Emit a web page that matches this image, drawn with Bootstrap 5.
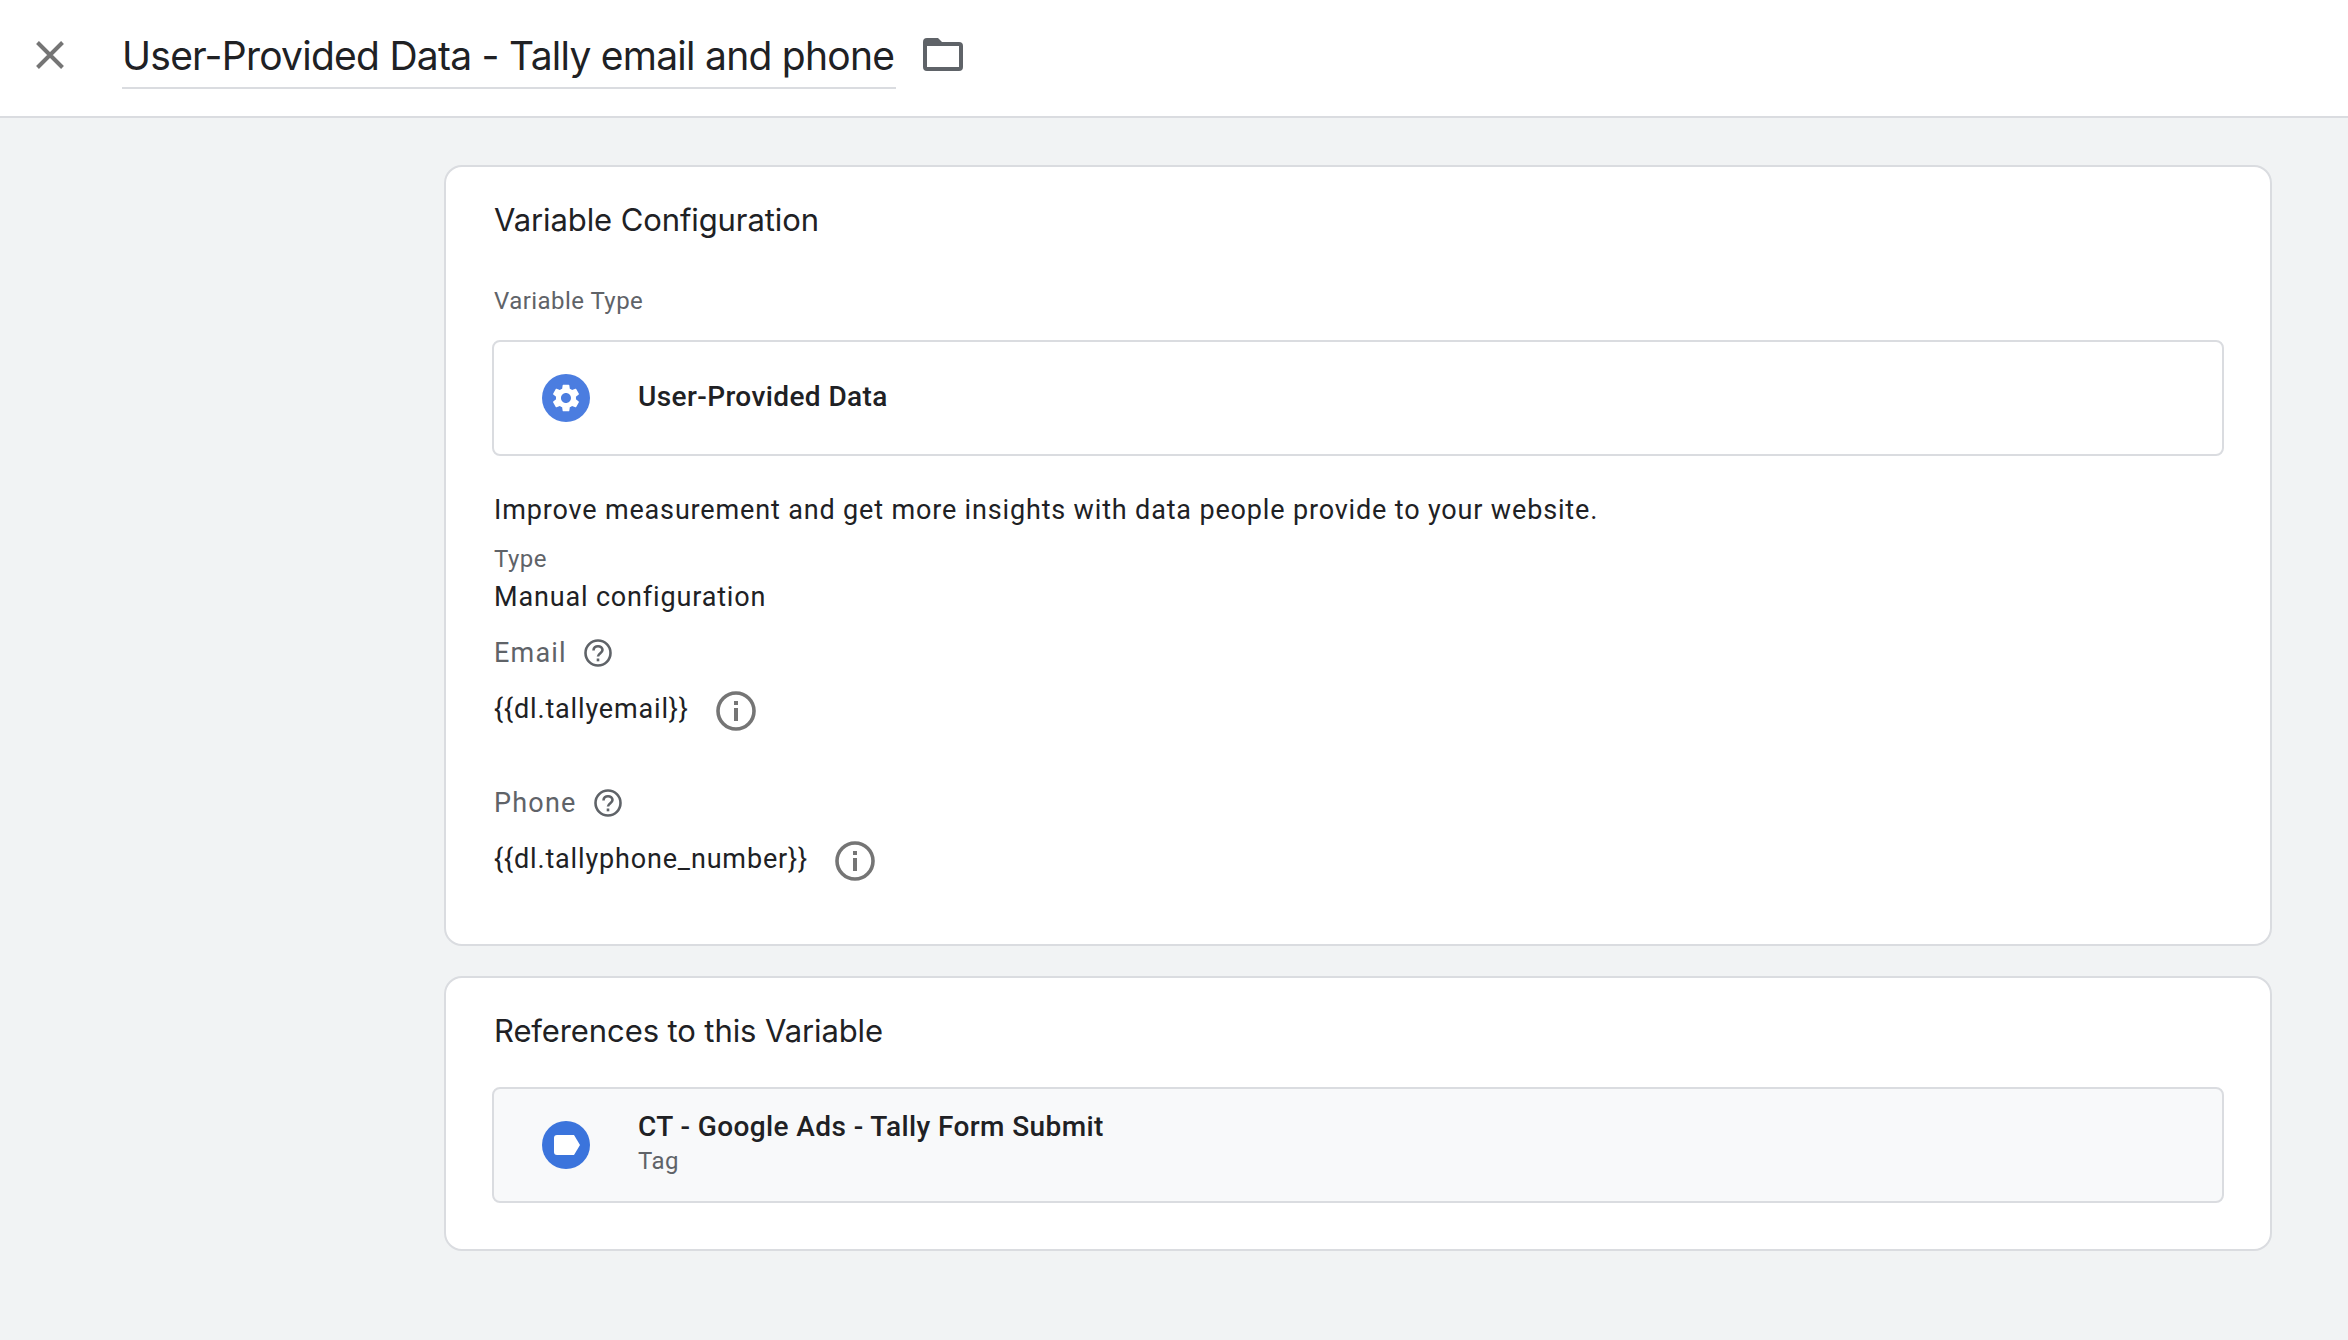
<!DOCTYPE html>
<html lang="en">
<head>
  <meta charset="UTF-8">
  <title>User-Provided Data - Tally email and phone</title>
  <meta name="viewport" content="width=device-width, initial-scale=1">
  <link href="https://cdn.jsdelivr.net/npm/bootstrap@5.3.3/dist/css/bootstrap.min.css" rel="stylesheet">
  <style>
    body { background: #f1f3f4; font-family: Roboto, "Liberation Sans", sans-serif; color: #202124; min-height: 1340px; }
    .top-bar { height: 118px; background: #fff; border-bottom: 2px solid #dadce0; padding-left: 36px; }
    .close-ico { width: 28px; height: 28px; margin-top: 41px; margin-right: 58px; flex: none; }
    .name-box { height: 89px; width: 774px; border-bottom: 2px solid #dadce0; padding-top: 34px; font-family: Inter, Roboto, sans-serif; font-size: 39px; line-height: 44px; letter-spacing: -.74px; white-space: nowrap; }
    .folder-ico { width: 40px; height: 33px; margin-top: 38px; margin-left: 27px; }
    .page-col { margin-left: 444px; width: 1828px; padding-top: 47px; }
    .cfg-card { background: #fff; border: 2px solid #dadce0; border-radius: 18px; padding: 0 46px; margin-bottom: 30px; }
    .card-one { height: 781px; }
    .card-two { height: 275px; }
    .sect-title { padding-top: 33px; padding-left: 2px; font-family: Inter, Roboto, sans-serif; font-size: 31px; line-height: 40px; letter-spacing: -.1px; }
    .small-lbl { font-size: 24px; line-height: 28px; color: #5f6368; letter-spacing: .45px; padding-left: 2px; }
    .type-box { height: 116px; border: 2px solid #dadce0; border-radius: 8px; padding-left: 48px; }
    .type-box.tinted { background: #f8f9fa; }
    .blue-ico { width: 48px; height: 48px; margin-right: 48px; flex: none; }
    .item-name { font-size: 28px; font-weight: 500; line-height: 32px; letter-spacing: .4px; }
    .body-txt { font-size: 27px; line-height: 34px; letter-spacing: .84px; padding-left: 2px; }
    .field-lbl { font-size: 27px; line-height: 34px; color: #5f6368; letter-spacing: 1.2px; padding-left: 2px; }
    .help-ico { width: 28px; height: 28px; margin-left: 17px; }
    .info-ico { width: 40px; height: 40px; margin-left: 27px; margin-top: 4px; }
    .gap-type-lbl { margin-top: 47px; }
    .gap-box { margin-top: 25px; }
    .gap-box-ref { margin-top: 36px; }
    .name-up { padding-bottom: 3px; }
    .ref-text { padding-bottom: 5px; }
    .ref-kind { margin-top: 4px; padding-left: 0; }
    .gap-improve { margin-top: 37px; }
    .gap-kind { margin-top: 18px; }
    .gap-manual { margin-top: 7px; }
    .gap-email { margin-top: 22px; }
    .gap-value { margin-top: 17px; }
    .gap-phone { margin-top: 55px; }
  </style>
</head>
<body>

  <div class="top-bar d-flex align-items-start">
    <svg class="close-ico" viewBox="0 0 28 28"><path d="M1.500 1.500 26.500 26.500M26.500 1.500 1.500 26.500" stroke="#757575" stroke-width="4" fill="none"/></svg>
    <div class="name-box">User-Provided Data - Tally email and phone</div>
    <svg class="folder-ico" viewBox="0 0 40 33"><path d="M4 0h11l4 4h17a4 4 0 0 1 4 4v21a4 4 0 0 1-4 4H4a4 4 0 0 1-4-4V4a4 4 0 0 1 4-4zM4 8v21h32V8z" fill="#5f6368" fill-rule="evenodd"/></svg>
  </div>

  <div class="page-col">
    <div class="cfg-card card-one">
      <div class="sect-title">Variable Configuration</div>
      <div class="small-lbl gap-type-lbl">Variable Type</div>
      <div class="type-box d-flex align-items-center gap-box">
        <svg class="blue-ico" viewBox="0 0 48 48"><circle cx="24" cy="24" r="24" fill="#4b7de0"/><path transform="translate(7.300 7.300) scale(1.390)" d="M19.14 12.94c.04-.3.06-.61.06-.94 0-.32-.02-.64-.07-.94l2.03-1.58a.49.49 0 0 0 .12-.61l-1.92-3.32a.488.488 0 0 0-.59-.22l-2.39.96c-.5-.38-1.03-.7-1.62-.94l-.36-2.54a.484.484 0 0 0-.48-.41h-3.84c-.24 0-.43.17-.47.41l-.36 2.54c-.59.24-1.13.57-1.62.94l-2.39-.96c-.22-.08-.47 0-.59.22L2.74 8.87c-.12.21-.08.47.12.61l2.03 1.58c-.05.3-.09.63-.09.94s.02.64.07.94l-2.03 1.58a.49.49 0 0 0-.12.61l1.92 3.32c.12.22.37.29.59.22l2.39-.96c.5.38 1.03.7 1.62.94l.36 2.54c.05.24.24.41.48.41h3.84c.24 0 .44-.17.47-.41l.36-2.54c.59-.24 1.13-.56 1.62-.94l2.39.96c.22.08.47 0 .59-.22l1.92-3.32c.12-.22.07-.47-.12-.61l-2.01-1.58zM12 15.6c-1.98 0-3.6-1.62-3.6-3.6s1.62-3.6 3.6-3.6 3.6 1.62 3.6 3.6-1.62 3.6-3.6 3.6z" fill="#fff"/></svg>
        <div class="item-name name-up">User-Provided Data</div>
      </div>
      <div class="body-txt gap-improve">Improve measurement and get more insights with data people provide to your website.</div>
      <div class="small-lbl gap-kind">Type</div>
      <div class="body-txt gap-manual">Manual configuration</div>
      <div class="field-lbl d-flex align-items-center gap-email">Email
        <svg class="help-ico" viewBox="0 0 28 28"><circle cx="14" cy="14" r="12.500" fill="none" stroke="#5f6368" stroke-width="2.600"/><path d="M9.500 11.500c0-2.800 2-4.200 4.500-4.200s4.500 1.500 4.500 3.800c0 2.900-4.500 3.300-4.500 6.500" fill="none" stroke="#5f6368" stroke-width="2.600"/><rect x="12.700" y="19.500" width="2.600" height="2.800" fill="#5f6368"/></svg>
      </div>
      <div class="body-txt d-flex align-items-center gap-value">{{dl.tallyemail}}
        <svg class="info-ico" viewBox="0 0 40 40"><circle cx="20" cy="20" r="18" fill="none" stroke="#757575" stroke-width="3.600"/><rect x="18" y="17" width="4" height="13" fill="#757575"/><rect x="18" y="10" width="4" height="4" fill="#757575"/></svg>
      </div>
      <div class="field-lbl d-flex align-items-center gap-phone">Phone
        <svg class="help-ico" viewBox="0 0 28 28"><circle cx="14" cy="14" r="12.500" fill="none" stroke="#5f6368" stroke-width="2.600"/><path d="M9.500 11.500c0-2.800 2-4.200 4.500-4.200s4.500 1.500 4.500 3.800c0 2.900-4.500 3.300-4.500 6.500" fill="none" stroke="#5f6368" stroke-width="2.600"/><rect x="12.700" y="19.500" width="2.600" height="2.800" fill="#5f6368"/></svg>
      </div>
      <div class="body-txt d-flex align-items-center gap-value">{{dl.tallyphone_number}}
        <svg class="info-ico" viewBox="0 0 40 40"><circle cx="20" cy="20" r="18" fill="none" stroke="#757575" stroke-width="3.600"/><rect x="18" y="17" width="4" height="13" fill="#757575"/><rect x="18" y="10" width="4" height="4" fill="#757575"/></svg>
      </div>
    </div>

    <div class="cfg-card card-two">
      <div class="sect-title">References to this Variable</div>
      <div class="type-box tinted d-flex align-items-center gap-box-ref">
        <svg class="blue-ico" viewBox="0 0 48 48"><circle cx="24" cy="24" r="24" fill="#3b74dc"/><path d="M12 17a3 3 0 0 1 3-3h17l6 10-6 10H15a3 3 0 0 1-3-3z" fill="#fff"/></svg>
        <div class="ref-text">
          <div class="item-name">CT - Google Ads - Tally Form Submit</div>
          <div class="small-lbl ref-kind">Tag</div>
        </div>
      </div>
    </div>
  </div>

  <script src="https://cdn.jsdelivr.net/npm/bootstrap@5.3.3/dist/js/bootstrap.bundle.min.js"></script>
</body>
</html>
